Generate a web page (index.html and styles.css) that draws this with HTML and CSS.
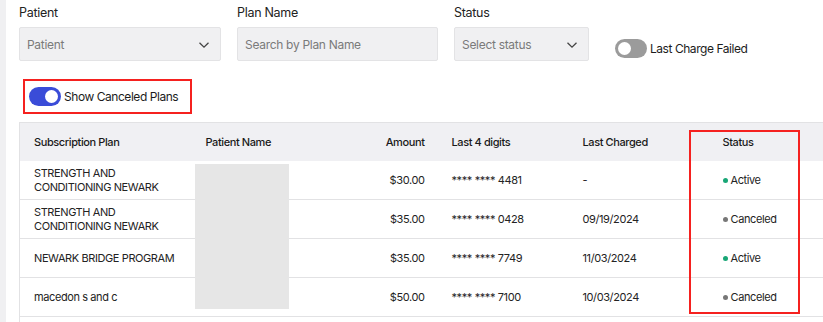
FILE: index.html
```html
<!DOCTYPE html>
<html>
<head>
  <title>Subscription Plans</title>
  <link rel="stylesheet" href="styles.css">
</head>
<body>
  <div class="layout">
    <aside class="side-edge"></aside>
    <main class="content">
      <div class="filters">
        <div class="field field-patient">
          <label class="field-label">Patient</label>
          <div class="control select">
            <span class="placeholder">Patient</span>
            <svg class="chevron" width="12" height="8" viewBox="0 0 12 8"><path d="M1.5 1.8 6 6.2l4.5-4.4" fill="none" stroke="#444" stroke-width="1.3"/></svg>
          </div>
        </div>
        <div class="field field-plan">
          <label class="field-label">Plan Name</label>
          <div class="control">
            <span class="placeholder">Search by Plan Name</span>
          </div>
        </div>
        <div class="field field-status">
          <label class="field-label">Status</label>
          <div class="control select">
            <span class="placeholder">Select status</span>
            <svg class="chevron" width="12" height="8" viewBox="0 0 12 8"><path d="M1.5 1.8 6 6.2l4.5-4.4" fill="none" stroke="#444" stroke-width="1.3"/></svg>
          </div>
        </div>
        <div class="toggle-row failed">
          <span class="toggle off"><span class="knob"></span></span>
          <span class="toggle-text">Last Charge Failed</span>
        </div>
      </div>

      <div class="canceled-box">
        <span class="toggle on"><span class="knob"></span></span>
        <span class="toggle-text">Show Canceled Plans</span>
      </div>

      <div class="table-wrap">
        <table class="plans">
          <colgroup>
            <col style="width:172px">
            <col style="width:140px">
            <col style="width:106px">
            <col style="width:131px">
            <col style="width:140px">
            <col style="width:160px">
          </colgroup>
          <thead>
            <tr>
              <th>Subscription Plan</th>
              <th>Patient Name</th>
              <th class="num">Amount</th>
              <th>Last 4 digits</th>
              <th>Last Charged</th>
              <th>Status</th>
            </tr>
          </thead>
          <tbody>
            <tr>
              <td>STRENGTH AND<br>CONDITIONING NEWARK</td>
              <td></td>
              <td class="num">$30.00</td>
              <td>**** **** 4481</td>
              <td>-</td>
              <td><span class="dot active"></span>Active</td>
            </tr>
            <tr>
              <td>STRENGTH AND<br>CONDITIONING NEWARK</td>
              <td></td>
              <td class="num">$35.00</td>
              <td>**** **** 0428</td>
              <td>09/19/2024</td>
              <td><span class="dot canceled"></span>Canceled</td>
            </tr>
            <tr>
              <td>NEWARK BRIDGE PROGRAM</td>
              <td></td>
              <td class="num">$35.00</td>
              <td>**** **** 7749</td>
              <td>11/03/2024</td>
              <td><span class="dot active"></span>Active</td>
            </tr>
            <tr>
              <td>macedon s and c</td>
              <td></td>
              <td class="num">$50.00</td>
              <td>**** **** 7100</td>
              <td>10/03/2024</td>
              <td><span class="dot canceled"></span>Canceled</td>
            </tr>
            <tr class="more">
              <td></td><td></td><td></td><td></td><td></td><td></td>
            </tr>
          </tbody>
        </table>
        <div class="redact"></div>
        <div class="status-mark"></div>
      </div>
    </main>
  </div>
</body>
</html>
```

FILE: styles.css
```css
html, body {
  margin: 0;
  height: 100%;
  overflow: hidden;
  background: #fff;
}

body {
  font-family: Inter, "Noto Sans", sans-serif;
  color: #1c1c1c;
  letter-spacing: -0.3px;
}

.layout {
  display: flex;
  height: 100%;
}

.side-edge {
  width: 6px;
  flex: none;
  background: #f0f0f2;
}

.content {
  flex: 1;
  min-width: 0;
  padding: 4px 0 0 13px;
}

.filters {
  display: flex;
  align-items: flex-end;
}

.field {
  display: flex;
  flex-direction: column;
  gap: 6px;
  margin-right: 16px;
}

.field-label {
  font-size: 12.5px;
  line-height: 17px;
  color: #222;
}

.field-patient { width: 202px; }
.field-plan { width: 201px; }
.field-status { width: 135px; margin-right: 26px; }

.control {
  box-sizing: border-box;
  height: 34px;
  display: flex;
  align-items: center;
  justify-content: space-between;
  padding: 0 10px 0 7px;
  background: #f0f0f2;
  border: 1px solid #e3e3e5;
  border-radius: 2px;
}

.placeholder {
  font-size: 12px;
  color: #7a7a7a;
}

.chevron {
  margin-top: 1px;
}

.toggle-row {
  display: flex;
  align-items: center;
  gap: 3px;
}

.failed {
  margin-bottom: 3px;
}

.toggle {
  position: relative;
  width: 32px;
  height: 19px;
  border-radius: 10px;
  flex: none;
}

.toggle.off { background: #9b9b9b; }
.toggle.on { background: #3a4cd8; }

.knob {
  position: absolute;
  top: 3px;
  width: 13px;
  height: 13px;
  border-radius: 50%;
  background: #fff;
}

.toggle.off .knob { left: 3px; }
.toggle.on .knob { right: 3px; }

.toggle-text {
  font-size: 12px;
  letter-spacing: -0.45px;
  color: #1c1c1c;
}

.canceled-box {
  display: flex;
  width: fit-content;
  align-items: center;
  gap: 3px;
  margin: 18px 0 0 4px;
  padding: 6px 12px 6px 4px;
  border: 2px solid #f5211f;
  box-sizing: border-box;
  height: 35px;
}

.table-wrap {
  position: relative;
  margin-top: 8px;
  overflow: hidden;
}

.plans {
  table-layout: fixed;
  border-collapse: collapse;
  width: 849px;
  font-size: 11px;
  letter-spacing: -0.4px;
  border-top: 1px solid #e2e2e4;
  border-left: 1px solid #e2e2e4;
}

.plans th {
  height: 38px;
  padding: 0 14px;
  text-align: left;
  font-weight: 500;
  background: #f0f0f3;
  color: #1a1a1a;
}

.plans td {
  height: 38px;
  padding: 0 14px;
  line-height: 14px;
  white-space: nowrap;
  border-bottom: 1px solid #e2e2e4;
  color: #232323;
}

.plans .num {
  text-align: right;
  padding-right: 13px;
}

.dot {
  display: inline-block;
  width: 5px;
  height: 5px;
  border-radius: 50%;
  margin-right: 3px;
  vertical-align: 1px;
}

.dot.active { background: #18a676; }
.dot.canceled { background: #777; }

.redact {
  position: absolute;
  left: 176px;
  top: 42px;
  width: 94px;
  height: 145px;
  background: #e6e6e6;
}

.status-mark {
  position: absolute;
  left: 670px;
  top: 8px;
  width: 107px;
  height: 180px;
  border: 2px solid #f5211f;
}
```
